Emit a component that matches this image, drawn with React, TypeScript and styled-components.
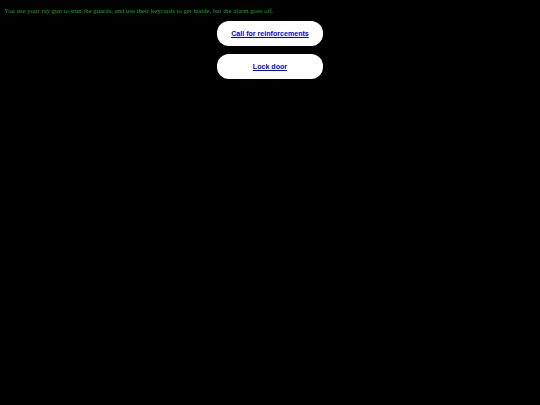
import React from "react";
import styled, { createGlobalStyle } from "styled-components";

const GlobalStyle = createGlobalStyle`
  html, body {
    margin: 0;
    padding: 0;
    background: #000;
  }
  body {
    min-height: 405px;
  }
`;

const Page = styled.main`
  padding: 6px 4px;
  font-family: "Liberation Serif", "Times New Roman", serif;
`;

const Story = styled.p`
  margin: 0;
  color: #22a322;
  font-size: 6.75px;
  line-height: 9px;
`;

const Choices = styled.ul`
  list-style: none;
  margin: 6px 0 0;
  padding: 0;
  display: flex;
  flex-direction: column;
  align-items: center;
  gap: 8px;
`;

const Choice = styled.li`
  width: 106px;
  height: 25px;
  border-radius: 12px;
  background: #fff;
  display: flex;
  align-items: center;
  justify-content: center;
`;

const ChoiceLink = styled.a`
  font-family: "Liberation Sans", Arial, sans-serif;
  font-weight: bold;
  font-size: 7.1px;
  color: #0000ee;
  text-decoration: underline;
  cursor: pointer;
`;

const choices = ["Call for reinforcements", "Lock door"];

export default function App() {
  return (
    <>
      <GlobalStyle />
      <Page>
        <Story>
          You use your ray gun to stun the guards, and use their keycards to get inside, but the alarm goes off.
        </Story>
        <Choices>
          {choices.map((c) => (
            <Choice key={c}>
              <ChoiceLink href="#">{c}</ChoiceLink>
            </Choice>
          ))}
        </Choices>
      </Page>
    </>
  );
}
